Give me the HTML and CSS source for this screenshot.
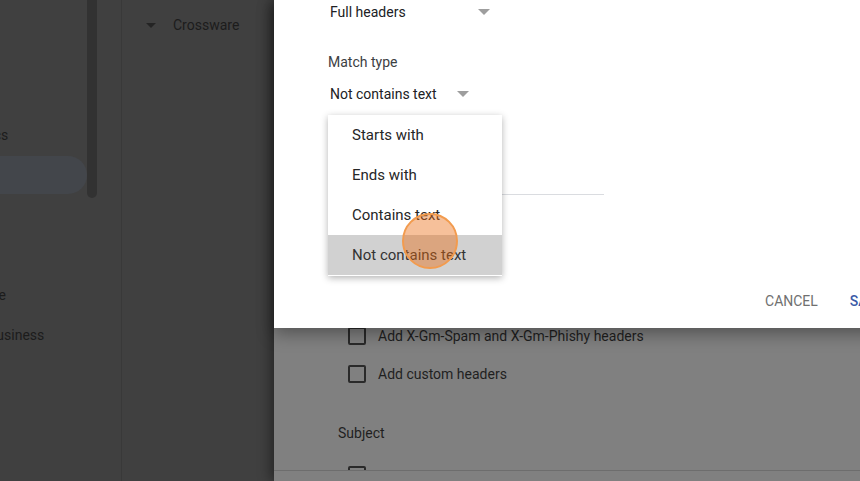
FILE: index.html
```html
<!DOCTYPE html>
<html lang="en">
<head>
  <meta charset="UTF-8">
  <meta name="viewport" content="width=device-width, initial-scale=1.0">
  <title>Routing - Match type</title>
  <link rel="stylesheet" href="styles.css">
</head>
<body>
  <div class="page">
    <!-- app behind the sheet -->
    <div class="app">
      <div class="sidebar">
        <ul class="nav">
          <li class="nav-item">Home</li>
          <li class="nav-item">Users</li>
          <li class="nav-item">Statistics</li>
          <li class="nav-item active">Mail</li>
          <li class="nav-item">Apps</li>
          <li class="nav-item">Drive</li>
          <li class="nav-item">Software</li>
          <li class="nav-item">Small business</li>
        </ul>
        <div class="scrollbar"></div>
      </div>
      <div class="org">
        <div class="org-row">
          <span class="caret"></span>
          <span>Crossware</span>
        </div>
      </div>
    </div>

    <!-- settings sheet -->
    <div class="sheet">
      <div class="sheet-body">
        <label class="check-row"><span class="checkbox"></span>Add X-Gm-Spam and X-Gm-Phishy headers</label>
        <label class="check-row"><span class="checkbox"></span>Add custom headers</label>
        <div class="section-title">Subject</div>
        <label class="check-row"><span class="checkbox"></span></label>
      </div>
      <div class="sheet-footer"></div>

      <div class="dialog">
        <div class="dialog-content">
          <div class="select select-wide">
            <span>Full headers</span>
            <span class="arrow"></span>
          </div>
          <div class="field-label">Match type</div>
          <div class="select select-narrow">
            <span>Not contains text</span>
            <span class="arrow"></span>
          </div>
          <div class="text-field"></div>
        </div>
        <div class="dialog-actions">
          <button class="btn btn-cancel">Cancel</button>
          <button class="btn btn-save">Save</button>
        </div>

        <ul class="menu">
          <li class="menu-item">Starts with</li>
          <li class="menu-item">Ends with</li>
          <li class="menu-item">Contains text</li>
          <li class="menu-item selected">Not contains text</li>
        </ul>
      </div>
    </div>

    <div class="click-marker"></div>
  </div>
</body>
</html>
```

FILE: styles.css
```css
* {
  box-sizing: border-box;
}
body {
  margin: 0;
  font-family: Roboto, "Noto Sans", Arial, sans-serif;
  font-size: 14px;
  overflow: hidden;
}
ul {
  list-style: none;
  margin: 0;
  padding: 0;
}
.page {
  position: relative;
  display: flex;
  width: 860px;
  height: 481px;
  overflow: hidden;
  background-color: #404040;
}

/* app behind */
.app {
  display: flex;
  width: 274px;
  flex-shrink: 0;
  color: #1c1c1c;
}
.sidebar {
  display: flex;
  width: 122px;
  border-right: 1px solid #393939;
  overflow: hidden;
}
.nav {
  width: 87px;
  padding-top: 36px;
}
.nav-item {
  height: 38px;
  margin-bottom: 2px;
  margin-left: -50px;
  line-height: 38px;
  white-space: nowrap;
}
.nav-item.active {
  background-color: #43464b;
  border-radius: 0 19px 19px 0;
}
.scrollbar {
  width: 10px;
  height: 198px;
  background-color: #323232;
  border-radius: 0 0 5px 5px;
}
.org {
  flex: 1;
}
.org-row {
  display: flex;
  align-items: center;
  height: 20px;
  margin-top: 15px;
  padding-left: 24px;
  gap: 17px;
}
.caret {
  width: 0;
  height: 0;
  border-left: 5px solid transparent;
  border-right: 5px solid transparent;
  border-top: 5px solid #242424;
}

/* sheet */
.sheet {
  position: relative;
  flex: 1;
  display: flex;
  flex-direction: column;
  background-color: #808080;
  box-shadow: -3px 0 12px rgba(0, 0, 0, 0.45);
  color: #1f1f1f;
}
.sheet-body {
  flex: 1;
  overflow: hidden;
  padding: 317px 0 0 64px;
}
.check-row {
  display: flex;
  align-items: center;
  height: 38px;
  padding-left: 10px;
  gap: 12px;
}
.checkbox {
  width: 18px;
  height: 18px;
  border: 2px solid #2a2a2a;
  border-radius: 2px;
}
.section-title {
  margin: 30px 0 13px;
  line-height: 20px;
}
.sheet-footer {
  height: 11px;
  border-top: 1px solid #6d6d6d;
}

/* dialog */
.dialog {
  position: absolute;
  top: 0;
  left: 0;
  width: 626px;
  height: 328px;
  background-color: #fff;
  box-shadow: 0 6px 16px rgba(0, 0, 0, 0.35);
  color: #202124;
}
.dialog-content {
  padding: 2px 0 0 54px;
}
.select {
  display: flex;
  justify-content: space-between;
  align-items: center;
  height: 20px;
  padding-left: 2px;
}
.select-wide {
  width: 162px;
}
.select-narrow {
  width: 141px;
  margin-top: 12px;
}
.arrow {
  width: 0;
  height: 0;
  border-left: 6px solid transparent;
  border-right: 6px solid transparent;
  border-top: 6px solid #9e9e9e;
}
.field-label {
  margin-top: 30px;
  line-height: 20px;
  color: #3c4043;
}
.text-field {
  width: 276px;
  height: 40px;
  margin-top: 51px;
  border-bottom: 1px solid #dadce0;
}
.dialog-actions {
  display: flex;
  justify-content: flex-end;
  gap: 16px;
  margin-top: 88px;
  padding-right: 8px;
}
.btn {
  height: 36px;
  padding: 0 8px;
  border: none;
  background: none;
  font-family: inherit;
  font-size: 14px;
  text-transform: uppercase;
  cursor: pointer;
}
.btn-cancel {
  color: #707070;
}
.btn-save {
  color: #3b5ba8;
  font-weight: 500;
}

/* dropdown menu */
.menu {
  position: absolute;
  top: 115px;
  left: 54px;
  width: 174px;
  height: 161px;
  overflow: hidden;
  background-color: #fff;
  box-shadow: 0 2px 7px rgba(0, 0, 0, 0.3);
}
.menu-item {
  height: 40px;
  padding-left: 24px;
  font-size: 15px;
  line-height: 40px;
  white-space: nowrap;
  color: #262626;
}
.menu-item.selected {
  background-color: #d1d1d1;
  color: #333;
}

/* click marker */
.click-marker {
  position: absolute;
  left: 402px;
  top: 213px;
  width: 56px;
  height: 56px;
  border: 2px solid #f29b4e;
  border-radius: 50%;
  background-color: rgba(234, 104, 14, 0.42);
}
```
